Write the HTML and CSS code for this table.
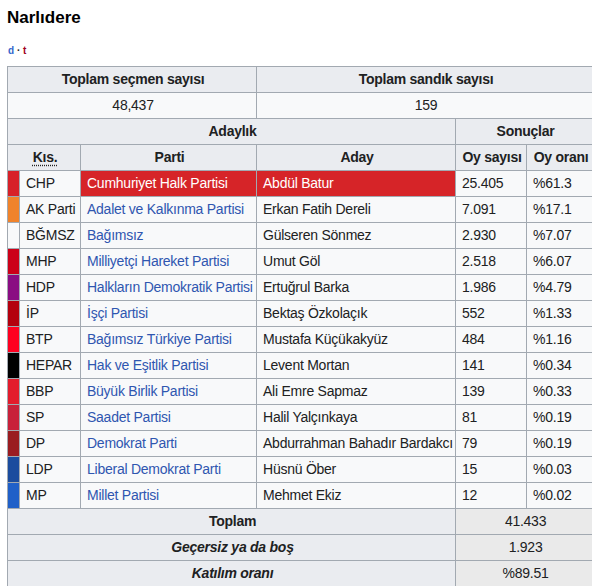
FILE: index.html
```html
<!DOCTYPE html>
<html lang="tr">
<head>
<meta charset="utf-8">
<title>Narlıdere</title>
<link rel="stylesheet" href="styles.css">
</head>
<body>
<div class="title">Narlıdere</div>
<div class="navbar"><span class="nav-d">d</span> · <span class="nav-t">t</span></div>
<table class="wikitable">
  <colgroup>
    <col class="c-strip"><col class="c-kis"><col class="c-parti"><col class="c-aday"><col class="c-oy"><col class="c-oran">
  </colgroup>
  <tr>
    <th colspan="3">Toplam seçmen sayısı</th>
    <th colspan="3">Toplam sandık sayısı</th>
  </tr>
  <tr>
    <td colspan="3" class="center">48,437</td>
    <td colspan="3" class="center">159</td>
  </tr>
  <tr>
    <th colspan="4">Adaylık</th>
    <th colspan="2">Sonuçlar</th>
  </tr>
  <tr>
    <th colspan="2"><abbr class="abbr">Kıs.</abbr></th>
    <th>Parti</th>
    <th>Aday</th>
    <th>Oy sayısı</th>
    <th>Oy oranı</th>
  </tr>
  <tr>
    <td class="strip chp"></td><td>CHP</td>
    <td class="winner">Cumhuriyet Halk Partisi</td><td class="winner">Abdül Batur</td>
    <td>25.405</td><td>%61.3</td>
  </tr>
  <tr>
    <td class="strip akp"></td><td>AK Parti</td>
    <td><a class="link">Adalet ve Kalkınma Partisi</a></td><td>Erkan Fatih Dereli</td>
    <td>7.091</td><td>%17.1</td>
  </tr>
  <tr>
    <td class="strip bgmsz"></td><td>BĞMSZ</td>
    <td><a class="link">Bağımsız</a></td><td>Gülseren Sönmez</td>
    <td>2.930</td><td>%7.07</td>
  </tr>
  <tr>
    <td class="strip mhp"></td><td>MHP</td>
    <td><a class="link">Milliyetçi Hareket Partisi</a></td><td>Umut Göl</td>
    <td>2.518</td><td>%6.07</td>
  </tr>
  <tr>
    <td class="strip hdp"></td><td>HDP</td>
    <td><a class="link">Halkların Demokratik Partisi</a></td><td>Ertuğrul Barka</td>
    <td>1.986</td><td>%4.79</td>
  </tr>
  <tr>
    <td class="strip ip"></td><td>İP</td>
    <td><a class="link">İşçi Partisi</a></td><td>Bektaş Özkolaçık</td>
    <td>552</td><td>%1.33</td>
  </tr>
  <tr>
    <td class="strip btp"></td><td>BTP</td>
    <td><a class="link">Bağımsız Türkiye Partisi</a></td><td>Mustafa Küçükakyüz</td>
    <td>484</td><td>%1.16</td>
  </tr>
  <tr>
    <td class="strip hepar"></td><td>HEPAR</td>
    <td><a class="link">Hak ve Eşitlik Partisi</a></td><td>Levent Mortan</td>
    <td>141</td><td>%0.34</td>
  </tr>
  <tr>
    <td class="strip bbp"></td><td>BBP</td>
    <td><a class="link">Büyük Birlik Partisi</a></td><td>Ali Emre Sapmaz</td>
    <td>139</td><td>%0.33</td>
  </tr>
  <tr>
    <td class="strip sp"></td><td>SP</td>
    <td><a class="link">Saadet Partisi</a></td><td>Halil Yalçınkaya</td>
    <td>81</td><td>%0.19</td>
  </tr>
  <tr>
    <td class="strip dp"></td><td>DP</td>
    <td><a class="link">Demokrat Parti</a></td><td>Abdurrahman Bahadır Bardakcı</td>
    <td>79</td><td>%0.19</td>
  </tr>
  <tr>
    <td class="strip ldp"></td><td>LDP</td>
    <td><a class="link">Liberal Demokrat Parti</a></td><td>Hüsnü Öber</td>
    <td>15</td><td>%0.03</td>
  </tr>
  <tr>
    <td class="strip mp"></td><td>MP</td>
    <td><a class="link">Millet Partisi</a></td><td>Mehmet Ekiz</td>
    <td>12</td><td>%0.02</td>
  </tr>
  <tr>
    <th colspan="4">Toplam</th>
    <td colspan="2" class="total">41.433</td>
  </tr>
  <tr>
    <th colspan="4"><i>Geçersiz ya da boş</i></th>
    <td colspan="2" class="total">1.923</td>
  </tr>
  <tr>
    <th colspan="4"><i>Katılım oranı</i></th>
    <td colspan="2" class="total">%89.51</td>
  </tr>
</table>
</body>
</html>
```
FILE: styles.css
```css
html, body {
  overflow-x: hidden;
}
body {
  margin: 0;
  padding: 8px 0 0 7px;
  background: #ffffff;
  color: #202122;
  font-family: "Liberation Sans", Arial, sans-serif;
}
.title {
  font-size: 17px;
  font-weight: bold;
  line-height: 20px;
  color: #000;
}
.navbar {
  margin-top: 17px;
  margin-left: 1px;
  font-size: 10px;
  line-height: 12px;
  font-weight: bold;
  color: #202122;
}
.nav-d { color: #3366cc; }
.nav-t { color: #a00020; }
.wikitable {
  margin-top: 9px;
  border-collapse: collapse;
  table-layout: fixed;
  width: 586px;
  background: #f8f9fa;
  border: 1px solid #a2a9b1;
  font-size: 14px;
  line-height: 19px;
  letter-spacing: -0.25px;
}
.c-strip { width: 12px; }
.c-kis { width: 61px; }
.c-parti { width: 176px; }
.c-aday { width: 199px; }
.c-oy { width: 71px; }
.c-oran { width: 67px; }
.wikitable th,
.wikitable td {
  border: 1px solid #a2a9b1;
  padding: 3px 4px 3px 6px;
  white-space: nowrap;
}
.wikitable th {
  background: #eaecf0;
  font-weight: bold;
  text-align: center;
}
.wikitable td.center { text-align: center; }
.wikitable td.total {
  text-align: center;
  background: #eaeaea;
}
.abbr {
  text-decoration: underline dotted;
  text-underline-offset: 3px;
}
.link { color: #2f56b0; }
.winner {
  background: #d62428;
  color: #ffffff;
}
.wikitable td.strip { padding: 0; }
.chp { background: #d72128; }
.akp { background: #f0832b; }
.bgmsz { background: #f8f9fa; }
.mhp { background: #cc0018; }
.hdp { background: #8a0d82; }
.ip { background: #b4000e; }
.btp { background: #ff0020; }
.hepar { background: #000000; }
.bbp { background: #e31c2c; }
.sp { background: #c8213a; }
.dp { background: #9a1c20; }
.ldp { background: #1b4c9e; }
.mp { background: #2060c8; }
```
